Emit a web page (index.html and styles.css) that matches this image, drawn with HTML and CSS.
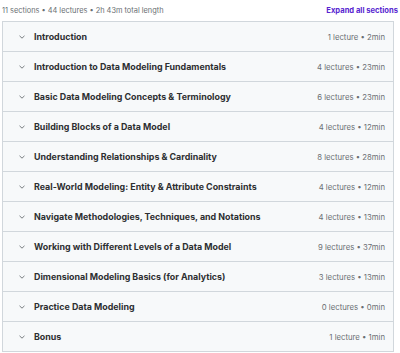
FILE: index.html
```html
<!DOCTYPE html>
<html lang="en">
<head>
    <meta charset="UTF-8">
    <meta name="viewport" content="width=device-width, initial-scale=1.0">
    <title>Course content</title>
    <link rel="stylesheet" href="styles.css">
</head>
<body>
    <div class="curriculum">
        <!-- Summary header -->
        <div class="summary">
            <span class="summary-text">11 sections • 44 lectures • 2h 43m total length</span>
            <button class="expand-all">Expand all sections</button>
        </div>

        <!-- Section list -->
        <div class="sections">
            <div class="section">
                <span class="chevron"><svg viewBox="0 0 10 10"><path d="M2.5 3.8 L5 6.2 L7.5 3.8"/></svg></span>
                <span class="section-title">Introduction</span>
                <span class="section-meta">1 lecture • 2min</span>
            </div>
            <div class="section">
                <span class="chevron"><svg viewBox="0 0 10 10"><path d="M2.5 3.8 L5 6.2 L7.5 3.8"/></svg></span>
                <span class="section-title">Introduction to Data Modeling Fundamentals</span>
                <span class="section-meta">4 lectures • 23min</span>
            </div>
            <div class="section">
                <span class="chevron"><svg viewBox="0 0 10 10"><path d="M2.5 3.8 L5 6.2 L7.5 3.8"/></svg></span>
                <span class="section-title">Basic Data Modeling Concepts &amp; Terminology</span>
                <span class="section-meta">6 lectures • 23min</span>
            </div>
            <div class="section">
                <span class="chevron"><svg viewBox="0 0 10 10"><path d="M2.5 3.8 L5 6.2 L7.5 3.8"/></svg></span>
                <span class="section-title">Building Blocks of a Data Model</span>
                <span class="section-meta">4 lectures • 12min</span>
            </div>
            <div class="section">
                <span class="chevron"><svg viewBox="0 0 10 10"><path d="M2.5 3.8 L5 6.2 L7.5 3.8"/></svg></span>
                <span class="section-title">Understanding Relationships &amp; Cardinality</span>
                <span class="section-meta">8 lectures • 28min</span>
            </div>
            <div class="section">
                <span class="chevron"><svg viewBox="0 0 10 10"><path d="M2.5 3.8 L5 6.2 L7.5 3.8"/></svg></span>
                <span class="section-title">Real-World Modeling: Entity &amp; Attribute Constraints</span>
                <span class="section-meta">4 lectures • 12min</span>
            </div>
            <div class="section">
                <span class="chevron"><svg viewBox="0 0 10 10"><path d="M2.5 3.8 L5 6.2 L7.5 3.8"/></svg></span>
                <span class="section-title">Navigate Methodologies, Techniques, and Notations</span>
                <span class="section-meta">4 lectures • 13min</span>
            </div>
            <div class="section">
                <span class="chevron"><svg viewBox="0 0 10 10"><path d="M2.5 3.8 L5 6.2 L7.5 3.8"/></svg></span>
                <span class="section-title">Working with Different Levels of a Data Model</span>
                <span class="section-meta">9 lectures • 37min</span>
            </div>
            <div class="section">
                <span class="chevron"><svg viewBox="0 0 10 10"><path d="M2.5 3.8 L5 6.2 L7.5 3.8"/></svg></span>
                <span class="section-title">Dimensional Modeling Basics (for Analytics)</span>
                <span class="section-meta">3 lectures • 13min</span>
            </div>
            <div class="section">
                <span class="chevron"><svg viewBox="0 0 10 10"><path d="M2.5 3.8 L5 6.2 L7.5 3.8"/></svg></span>
                <span class="section-title">Practice Data Modeling</span>
                <span class="section-meta">0 lectures • 0min</span>
            </div>
            <div class="section">
                <span class="chevron"><svg viewBox="0 0 10 10"><path d="M2.5 3.8 L5 6.2 L7.5 3.8"/></svg></span>
                <span class="section-title">Bonus</span>
                <span class="section-meta">1 lecture • 1min</span>
            </div>
        </div>
    </div>
</body>
</html>
```

FILE: styles.css
```css
body {
    font-family: Inter, "Noto Sans", sans-serif;
    background-color: #ffffff;
    color: #2d2f31;
    margin: 0;
}
.curriculum {
    padding: 0 2px;
}
.summary {
    display: flex;
    justify-content: space-between;
    align-items: center;
    height: 20px;
    padding-bottom: 1px;
}
.summary-text {
    font-size: 7.4px;
    color: #6a6f73;
}
.expand-all {
    background: none;
    border: none;
    padding: 0;
    font-family: inherit;
    font-size: 7.6px;
    font-weight: 700;
    color: #5624d0;
    cursor: pointer;
}
.sections {
    border: 1px solid #d1d7dc;
    border-bottom: none;
    margin-right: 4px;
}
.section {
    display: flex;
    align-items: center;
    height: 29px;
    padding: 0 8px 0 14px;
    background-color: #f7f9fa;
    border-bottom: 1px solid #d1d7dc;
}
.chevron {
    width: 10px;
    height: 10px;
    margin-right: 7px;
    display: flex;
}
.chevron svg {
    width: 10px;
    height: 10px;
    fill: none;
    stroke: #6a6f73;
    stroke-width: 0.9;
}
.section-title {
    flex: 1;
    font-size: 8.9px;
    font-weight: 700;
}
.section-meta {
    font-size: 7.75px;
    color: #6a6f73;
}
```
